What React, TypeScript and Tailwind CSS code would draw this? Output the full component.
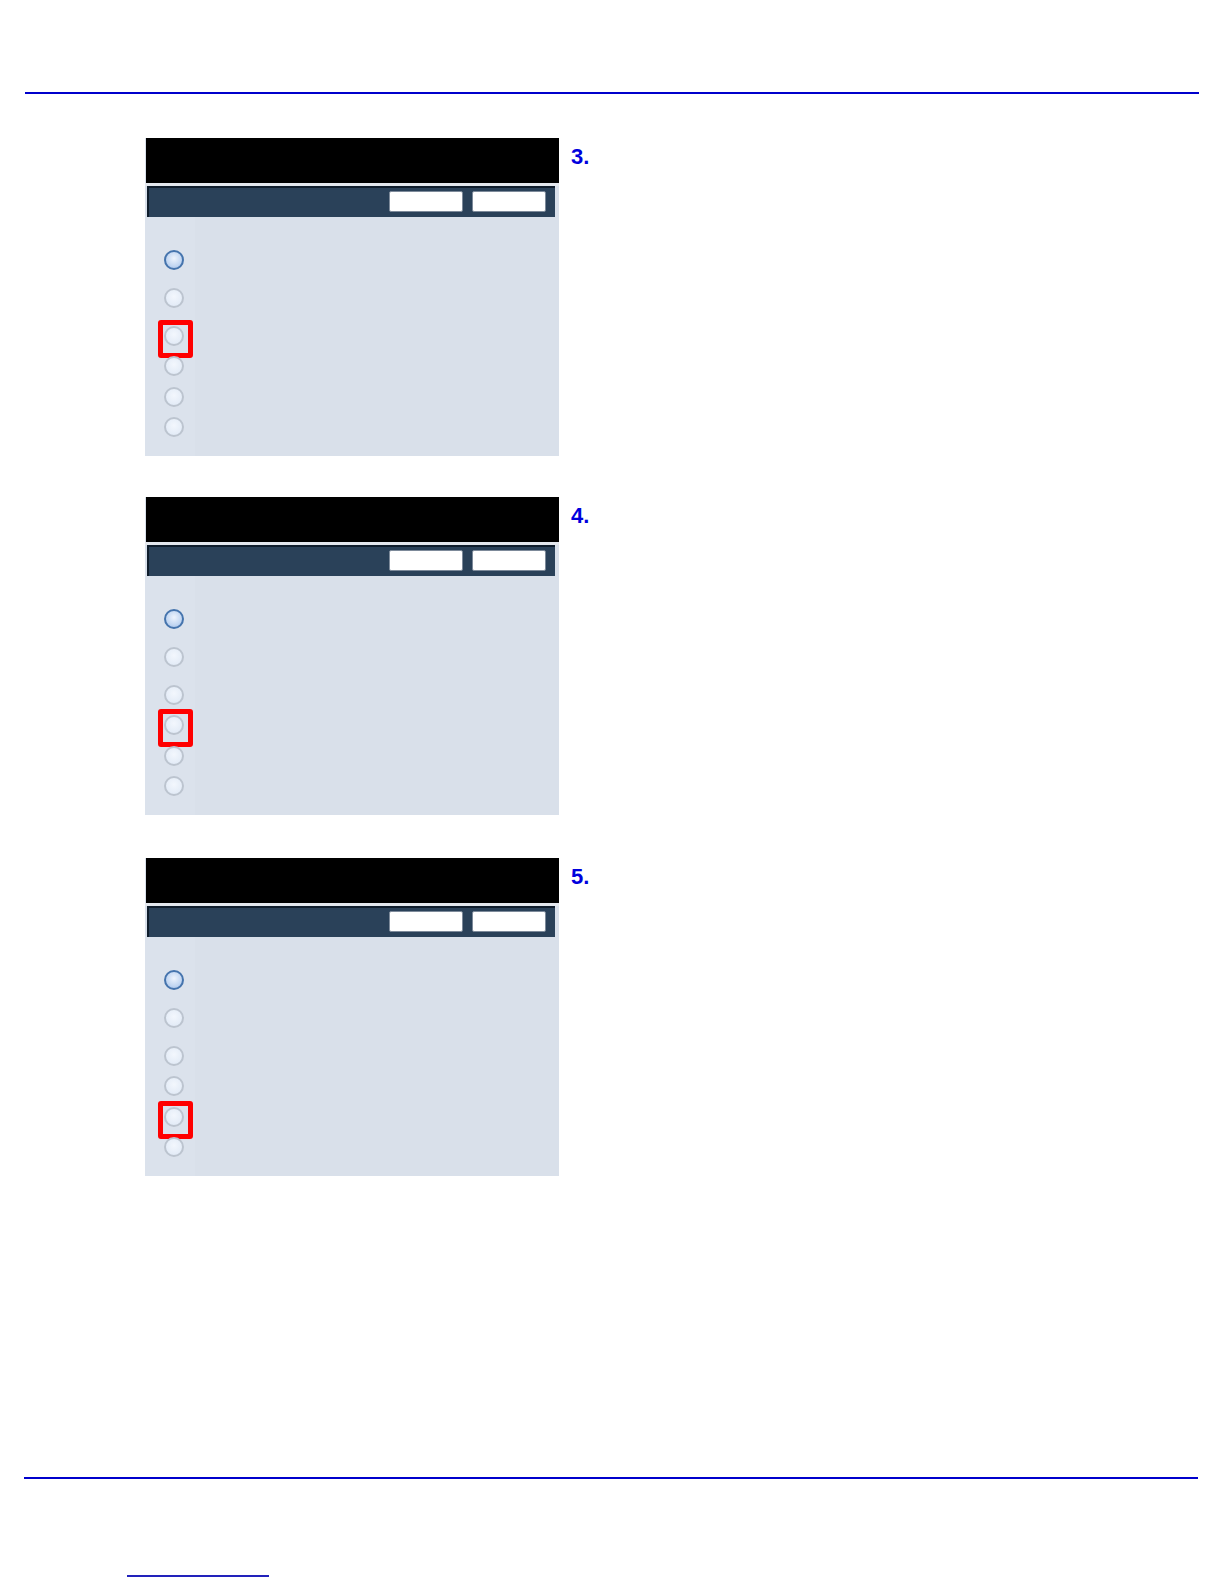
import React from 'react'

type Step = {
  num: string
  highlight: number
  mt: string
}

const steps: Step[] = [
  { num: '3.', highlight: 2, mt: 'mt-[44px]' },
  { num: '4.', highlight: 3, mt: 'mt-[41px]' },
  { num: '5.', highlight: 4, mt: 'mt-[43px]' },
]

// vertical spacing before each radio (px from previous radio)
const radioGaps = ['mt-[33px]', 'mt-[18px]', 'mt-[18px]', 'mt-[10px]', 'mt-[11px]', 'mt-[10px]']

function Radio({ selected, boxed, gap }: { selected: boolean; boxed: boolean; gap: string }) {
  return (
    <div className={`relative w-[20px] h-[20px] ${gap}`}>
      {selected ? (
        <div className="w-[20px] h-[20px] rounded-full border-2 border-[#4574ad] bg-[radial-gradient(circle_at_50%_40%,#eef4fd_0%,#c3d7f2_60%,#9dbbe6_100%)]" />
      ) : (
        <div className="w-[20px] h-[20px] rounded-full border-2 border-[#bcc4cf] bg-[radial-gradient(circle_at_50%_40%,#f3f7fd_0%,#e4ecf7_70%,#d3deee_100%)]" />
      )}
      {boxed && (
        <div className="absolute -left-[6px] -top-[6px] w-[35px] h-[38px] border-[5px] border-[#ff0000] rounded-[3px]" />
      )}
    </div>
  )
}

function Panel({ highlight }: { highlight: number }) {
  return (
    <div className="w-[414px] h-[318px] flex flex-col bg-[#d9e0ea]">
      <div className="h-[45px] bg-black ml-px" />
      <div className="h-[3px] bg-[#e4e8ee]" />
      <div className="h-[31px] ml-[2px] mr-[4px] bg-[#2a4159] border-t-2 border-l-2 border-[#0f1d2c] flex items-start justify-end gap-[9px] pr-[9px] pt-[3px]">
        <div className="w-[74px] h-[21px] bg-white border-[1.5px] border-[#7d8a9a] rounded-[2px]" />
        <div className="w-[74px] h-[21px] bg-white border-[1.5px] border-[#7d8a9a] rounded-[2px]" />
      </div>
      <div className="flex-1 flex">
        <div className="w-[50px] bg-[#dbe2ec] flex flex-col items-start pl-[19px]">
          {radioGaps.map((g, i) => (
            <Radio key={i} selected={i === 0} boxed={i === highlight} gap={g} />
          ))}
        </div>
        <div className="flex-1" />
      </div>
    </div>
  )
}

export default function App() {
  return (
    <div className="w-[1224px] h-[1584px] bg-white font-['Liberation_Sans',Arial,sans-serif]">
      <div className="pt-[92px] pl-[25px]">
        <div className="w-[1174px] h-[2px] bg-[#0000cc]" />
      </div>

      {steps.map((s) => (
        <div key={s.num} className={`flex items-start ml-[145px] ${s.mt}`}>
          <Panel highlight={s.highlight} />
          <span className="ml-[12px] mt-[8px] text-[22px] leading-none font-bold text-[#0000dd]">
            {s.num}
          </span>
        </div>
      ))}

      <div className="mt-[301px] pl-[24px]">
        <div className="w-[1174px] h-[2px] bg-[#0000cc]" />
      </div>
      <div className="mt-[96px] pl-[127px]">
        <div className="w-[142px] h-[2px] bg-[#2222bb]" />
      </div>
    </div>
  )
}
